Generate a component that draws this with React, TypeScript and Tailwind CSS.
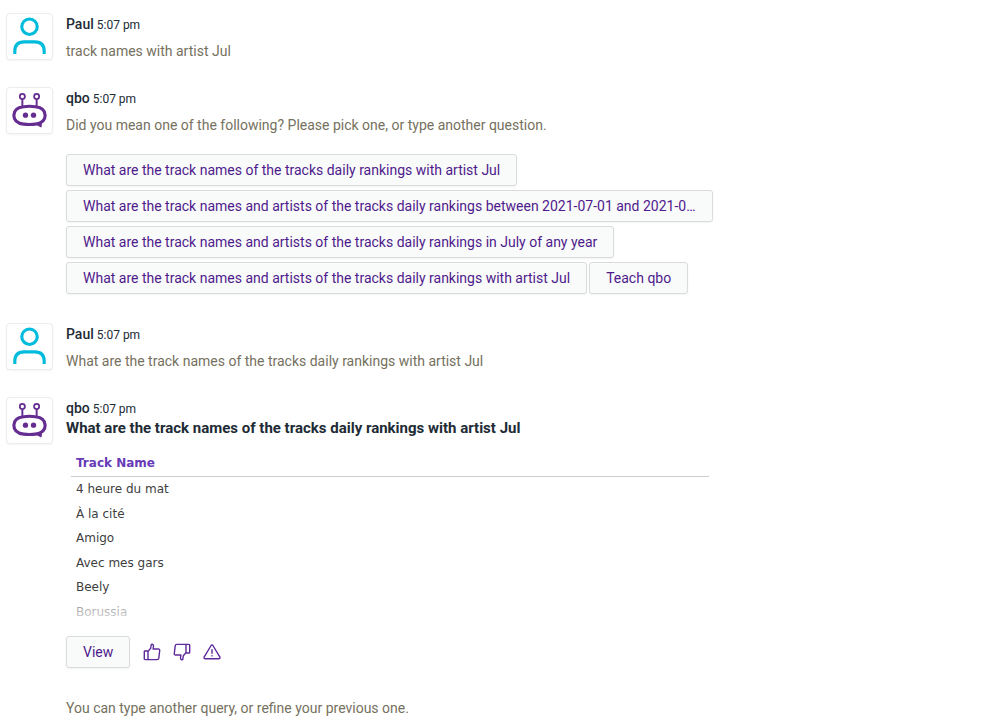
import type { ReactNode } from "react";

function PersonIcon() {
  return (
    <svg viewBox="0 0 46 46" className="h-full w-full" fill="none" stroke="#00bcdc" strokeWidth="3.2" aria-hidden="true">
      <circle cx="23" cy="13" r="7.9" />
      <path d="M8 41V38C8 31.5 11.5 28.5 17.5 28.5H28.5C34.5 28.5 38 31.5 38 38V41" />
    </svg>
  );
}

function BotIcon() {
  return (
    <svg viewBox="0 0 46 46" className="h-full w-full" fill="none" stroke="#662d91" aria-hidden="true">
      <circle cx="15.7" cy="8.7" r="2.6" strokeWidth="1.8" />
      <circle cx="30.3" cy="8.7" r="2.6" strokeWidth="1.8" />
      <path d="M15.7 11.5V19M30.3 11.5V19" strokeWidth="2" />
      <path
        d="M17 19.2C20.5 18.6 25.5 18.6 29 19.2C35 19.8 39 22.6 39 27.9C39 33.2 35 36.3 29 36.9C25.5 37.4 20.5 37.4 17 36.9C11 36.3 7 33.2 7 27.9C7 22.6 11 19.8 17 19.2Z"
        strokeWidth="3.2"
      />
      <path d="M30 37.5L36 34.5L35.3 40.2C34 40.2 32.3 38.9 30 37.5Z" fill="#662d91" stroke="none" />
      <circle cx="18.9" cy="27.8" r="2.7" fill="#662d91" stroke="none" />
      <circle cx="27.1" cy="27.8" r="2.7" fill="#662d91" stroke="none" />
    </svg>
  );
}

function ThumbIcon({ down = false }: { down?: boolean }) {
  return (
    <svg viewBox="0 0 18 18" className={down ? "size-[18px] rotate-180" : "size-[18px]"} fill="none" stroke="#5e2a9b" strokeWidth="1.4" strokeLinejoin="round" aria-hidden="true">
      <path d="M1.5 8H5V16.6H2.2Q1.3 16.6 1.3 15.7V8.6Q1.3 8 1.9 8Z" />
      <path d="M5 8.4L7.7 5.2L8.2 2Q8.4 1 9.3 1.2Q10.7 1.5 10.5 3.2L10.1 6H15.3Q16.9 6 16.7 7.5L15.8 15.2Q15.6 16.6 14.2 16.6H5" />
    </svg>
  );
}

function WarningIcon() {
  return (
    <svg viewBox="0 0 18 18" className="size-[18px]" fill="none" stroke="#5e2a9b" strokeWidth="1.4" strokeLinejoin="round" strokeLinecap="round" aria-hidden="true">
      <path d="M8.1 2.5Q9 1.2 9.9 2.5L16.9 14.1Q17.5 15.6 16 15.7H2Q.5 15.6 1.1 14.1Z" />
      <path d="M9 6.6V10.2M9 12.7V12.9" />
    </svg>
  );
}

function Message({ author, children }: { author: "Paul" | "qbo"; children: ReactNode }) {
  return (
    <article className="flex gap-[13px]">
      <div className="size-[47px] shrink-0 rounded-sm border border-[#ececec] bg-white shadow-xs">
        {author === "Paul" ? <PersonIcon /> : <BotIcon />}
      </div>
      <div className="w-full max-w-[648px] min-w-0 pt-px">
        <header className="flex h-5 items-baseline gap-[3px] leading-5 text-[#212b36]">
          <span className="font-medium">{author}</span>
          <time className="text-xs leading-5">5:07 pm</time>
        </header>
        {children}
      </div>
    </article>
  );
}

function Text({ children }: { children: ReactNode }) {
  return <p className="mt-[7px] leading-5 text-[#75715e]">{children}</p>;
}

function ChatButton({ children }: { children: ReactNode }) {
  return (
    <button
      type="button"
      className="h-8 max-w-full truncate rounded-[3px] border border-[#d9dbdd] bg-[#f9fafa] px-4 text-[#4f1a8c] shadow-xs hover:bg-gray-100"
    >
      {children}
    </button>
  );
}

const suggestions = [
  "What are the track names of the tracks daily rankings with artist Jul",
  "What are the track names and artists of the tracks daily rankings between 2021-07-01 and 2021-0…",
  "What are the track names and artists of the tracks daily rankings in July of any year",
  "What are the track names and artists of the tracks daily rankings with artist Jul",
  "Teach qbo",
];

const tracks = ["4 heure du mat", "À la cité", "Amigo", "Avec mes gars", "Beely", "Borussia"];

export default function App() {
  return (
    <main className="flex flex-col bg-white px-1.5 pt-[13px] font-['Roboto',sans-serif] text-sm">
      <div className="flex flex-col gap-[26px]">
        <Message author="Paul">
          <Text>track names with artist Jul</Text>
        </Message>
        <Message author="qbo">
          <Text>Did you mean one of the following? Please pick one, or type another question.</Text>
          <div className="mt-[19px] mb-[3px] flex flex-wrap gap-x-0.5 gap-y-1">
            {suggestions.map((text) => (
              <ChatButton key={text}>{text}</ChatButton>
            ))}
          </div>
        </Message>
        <Message author="Paul">
          <Text>What are the track names of the tracks daily rankings with artist Jul</Text>
        </Message>
        <Message author="qbo">
          <h2 className="text-[15px] leading-5 font-bold text-[#212b36]">
            What are the track names of the tracks daily rankings with artist Jul
          </h2>
          <div className="relative mt-[13px] px-[5px]">
            <table className="h-[173px] w-full border-collapse text-left font-['DejaVu_Sans',sans-serif] text-[12px] leading-4 text-[#404040]">
              <thead>
                <tr className="h-[25px] border-b border-[#cccccc]">
                  <th scope="col" className="px-[5px] font-bold text-[#673ab7]">Track Name</th>
                </tr>
              </thead>
              <tbody>
                {tracks.map((track) => (
                  <tr key={track}>
                    <td className="px-[5px]">{track}</td>
                  </tr>
                ))}
              </tbody>
            </table>
            <div className="pointer-events-none absolute inset-x-0 bottom-0 h-7 bg-linear-to-b from-white/30 to-white/90" />
          </div>
          <div className="mt-3 flex items-center gap-[13px]">
            <ChatButton>View</ChatButton>
            <div className="flex gap-3">
              <button type="button" aria-label="Like"><ThumbIcon /></button>
              <button type="button" aria-label="Dislike"><ThumbIcon down /></button>
              <button type="button" aria-label="Report a problem"><WarningIcon /></button>
            </div>
          </div>
          <p className="mt-[30px] leading-5 text-[#75715e]">You can type another query, or refine your previous one.</p>
        </Message>
      </div>
    </main>
  );
}
